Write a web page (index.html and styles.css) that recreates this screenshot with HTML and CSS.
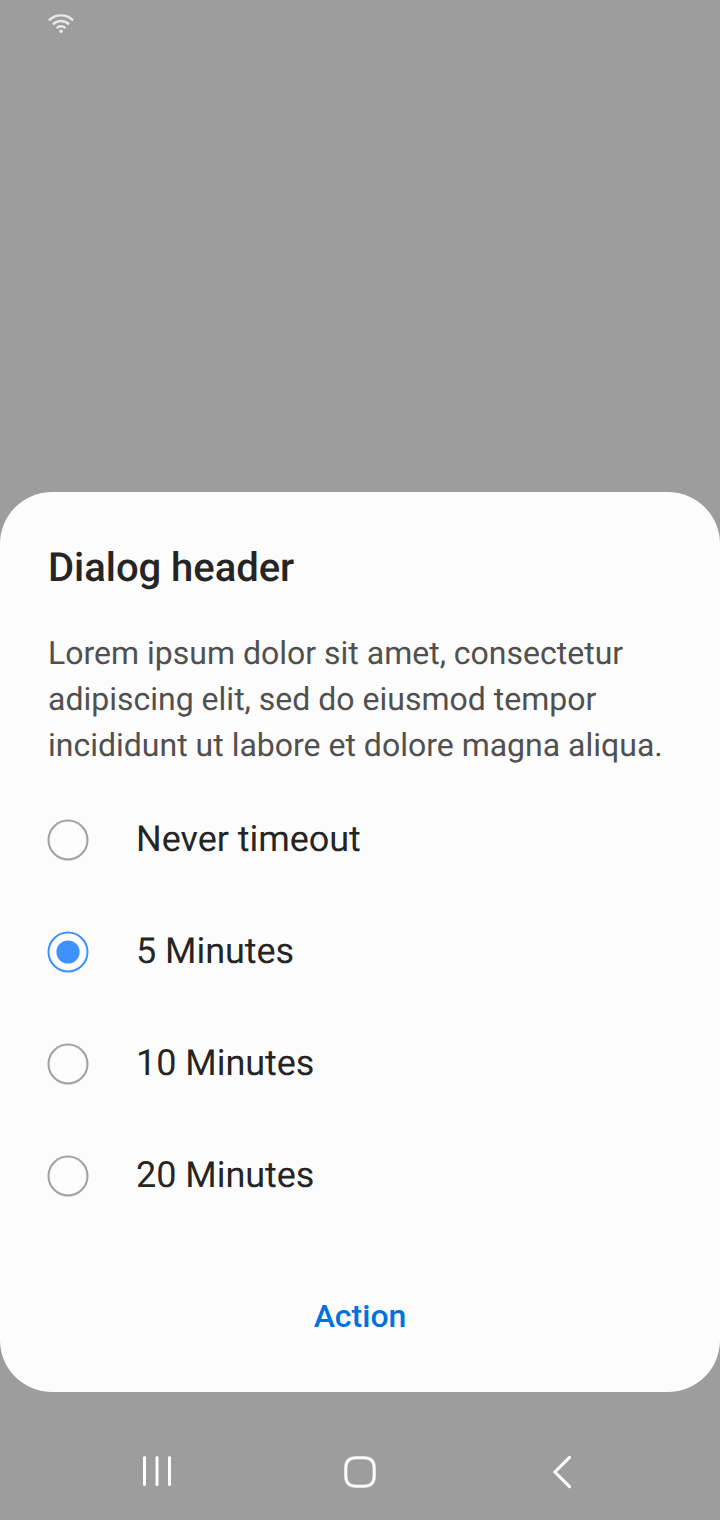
FILE: index.html
```html
<!DOCTYPE html>
<html lang="en">
<head>
<meta charset="utf-8">
<title>Dialog</title>
<link rel="stylesheet" href="styles.css">
</head>
<body>
<div class="screen">
  <header class="status">
    <svg class="wifi" width="28" height="24" viewBox="0 0 28 24" fill="none" stroke="#e8e8e8" stroke-width="2.4"><path d="M1.9 8.4a17 17 0 0 1 24.2 0M5.9 12.3a11.5 11.5 0 0 1 16.2 0M9.6 16.1a6.2 6.2 0 0 1 8.8 0"/><circle cx="14" cy="19.3" r="1.8" fill="#e8e8e8" stroke="none"/></svg>
  </header>
  <main class="dialog">
    <h1 class="title">Dialog header</h1>
    <p class="message">Lorem ipsum dolor sit amet, consectetur<br>adipiscing elit, sed do eiusmod tempor<br>incididunt ut labore et dolore magna aliqua.</p>
    <div class="options" role="radiogroup">
      <div class="option"><svg class="radio" viewBox="0 0 42 42"><circle class="ring" cx="21" cy="21" r="19.5"/></svg><span class="label">Never timeout</span></div>
      <div class="option"><svg class="radio radio-on" viewBox="0 0 42 42"><circle class="ring" cx="21" cy="21" r="19.5"/><circle class="dot" cx="21" cy="21" r="11.6"/></svg><span class="label">5 Minutes</span></div>
      <div class="option"><svg class="radio" viewBox="0 0 42 42"><circle class="ring" cx="21" cy="21" r="19.5"/></svg><span class="label">10 Minutes</span></div>
      <div class="option"><svg class="radio" viewBox="0 0 42 42"><circle class="ring" cx="21" cy="21" r="19.5"/></svg><span class="label">20 Minutes</span></div>
    </div>
    <button class="action">Action</button>
  </main>
  <nav class="navbar">
    <svg class="recents" width="30" height="32" viewBox="0 0 30 32" fill="none" stroke="#fff" stroke-width="3" stroke-linecap="round"><path d="M2.5 2.4v27.2M15 2.4v27.2M27.5 2.4v27.2"/></svg>
    <svg class="home" width="34" height="34" viewBox="0 0 34 34" fill="none" stroke="#fff" stroke-width="3"><path d="M13 2.8h8Q31.2 2.8 31.2 13v8Q31.2 31.2 21 31.2h-8Q2.8 31.2 2.8 21v-8Q2.8 2.8 13 2.8Z"/></svg>
    <svg class="back" width="20" height="34" viewBox="0 0 20 34" fill="none" stroke="#fff" stroke-width="3" stroke-linecap="round"><path d="M17.5 2.4 2.9 17l14.6 14.6"/></svg>
  </nav>
</div>
</body>
</html>
```
FILE: styles.css
```css
body { margin: 0; font-family: Roboto, sans-serif; text-rendering: geometricPrecision; }
.screen { width: 720px; height: 1520px; background: #9d9d9d; display: flex; flex-direction: column; overflow: hidden; }
.status { height: 492px; box-sizing: border-box; padding: 12px 47px; }
.wifi { display: block; }
.dialog { height: 900px; box-sizing: border-box; background: #fcfcfc; border-radius: 52px; padding: 52px 48px 0; display: flex; flex-direction: column; }
.title { margin: 0; font-size: 40px; line-height: 48px; font-weight: 500; letter-spacing: -0.04px; color: #252525; }
.message { margin: 38px 0 0; font-size: 32px; line-height: 46px; color: #505050; white-space: nowrap; }
.options { margin: 16px 0 0 -1px; }
.option { height: 112px; display: flex; align-items: center; gap: 47px; font-size: 36px; letter-spacing: -0.04px; color: #252525; }
.radio { width: 42px; height: 42px; fill: none; color: #a0a0a0; }
.ring { stroke: currentColor; stroke-width: 2; }
.radio-on { color: #3e91ff; }
.dot { fill: currentColor; }
.label { padding-bottom: 2px; }
.action { align-self: center; margin-top: 48px; height: 72px; padding: 0; border: 0; background: none; font: 500 32px Roboto, sans-serif; color: #0072de; }
.navbar { height: 128px; display: flex; align-items: flex-start; padding: 63px 0 0 142px; box-sizing: border-box; }
.home { margin: 0 175px 0 171px; }
```
